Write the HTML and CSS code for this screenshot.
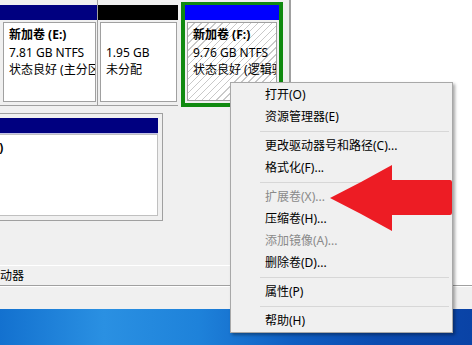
FILE: index.html
```html
<!DOCTYPE html>
<html lang="zh-CN">
<head>
  <meta charset="UTF-8" />
  <title>磁盘管理</title>
  <link rel="stylesheet" href="styles.css">
</head>
<body>
  <div class="window">
    <div class="top">
      <div class="left">
        <div class="row1">
          <div class="part part-e">
            <div class="bar navy"></div>
            <div class="body">
              <div class="line b">新加卷 (E:)</div>
              <div class="line">7.81 GB NTFS</div>
              <div class="line">状态良好 (主分区)</div>
            </div>
          </div>
          <div class="part part-u">
            <div class="bar black"></div>
            <div class="body">
              <div class="line">&nbsp;</div>
              <div class="line">1.95 GB</div>
              <div class="line">未分配</div>
            </div>
          </div>
          <div class="part part-f">
            <div class="bar blue"></div>
            <div class="body hatch">
              <div class="line b">新加卷 (F:)</div>
              <div class="line">9.76 GB NTFS</div>
              <div class="line">状态良好 (逻辑驱动器)</div>
            </div>
          </div>
        </div>
        <div class="row2">
          <div class="big">
            <div class="bar navy lav"></div>
            <div class="body">
              <div class="line b">新加卷 (G:)</div>
              <div class="line">9.77 GB</div>
              <div class="line">状态良好</div>
            </div>
          </div>
        </div>
        <div class="spacer"></div>
        <div class="drive-row">动器</div>
      </div>
      <div class="right"></div>
    </div>
    <div class="status"></div>
  </div>
  <div class="desk"></div>

  <div class="menu">
    <div class="item">打开(O)</div>
    <div class="item">资源管理器(E)</div>
    <div class="sep"></div>
    <div class="item">更改驱动器号和路径(C)...</div>
    <div class="item">格式化(F)...</div>
    <div class="sep"></div>
    <div class="item off">扩展卷(X)...</div>
    <div class="item">压缩卷(H)...</div>
    <div class="item off">添加镜像(A)...</div>
    <div class="item">删除卷(D)...</div>
    <div class="sep"></div>
    <div class="item">属性(P)</div>
    <div class="sep"></div>
    <div class="item">帮助(H)</div>
  </div>

  <svg class="arrow" width="132" height="74" viewBox="326 162 132 74">
    <path d="M330 198 Q362 182 392 165 L392 180 L450 180 Q452 180 452 182 L452 213 Q452 215 450 215 L392 215 L392 231 Q362 214 330 198 Z" fill="#ed1c24"/>
  </svg>
</body>
</html>
```

FILE: styles.css
```css
body { margin: 0; width: 472px; height: 345px; overflow: hidden; position: relative; font-family: "Noto Sans", "Noto Sans CJK SC", sans-serif; font-size: 12px; color: #000; }
.window { height: 309px; background: #f0f0f0; display: flex; flex-direction: column; }
.top { height: 286px; display: flex; border-bottom: 1px solid #a0a0a0; box-sizing: border-box; }
.left { width: 289px; display: flex; flex-direction: column; overflow: hidden; }
.right { flex: 1; background: #fff; border-left: 2px solid #a0a0a0; }
.status { flex: 1; border-top: 1px solid #fff; }
.desk { height: 36px; background: linear-gradient(to right, #1371cf 0, #2a90e2 22%, #1e82da 42%, #0f5ec2 62%, #0b4bb0 80%, #0a43a6 100%); }

.row1 { display: flex; height: 107px; flex: none; }
.part { display: flex; flex-direction: column; box-sizing: border-box; }
.part-e, .part-u { height: 106px; padding-top: 5px; border-bottom: 1px solid #a0a0a0; }
.part-e { width: 98px; border-right: 1px solid #a0a0a0; }
.part-u { width: 80px; }
.part-e .body { margin: 2px 1px 0 3px; height: 80px; }
.part-u .body { margin: 2px 1px 0 2px; height: 80px; }
.part-f { width: 102px; height: 105px; margin: 2px 0 0 3px; border: 3px solid #108a10; border-width: 3px 4px 4px 4px; }
.part-f .body { margin: 2px 2px 0 2px; height: 79px; }

.bar { height: 15px; flex: none; }
.navy { background: #000080; }
.black { background: #000; }
.blue { background: #0000ff; }
.lav { border-bottom: 1px solid #c4c4e8; }

.body { background: #fff; border: 1px solid #a0a0a0; box-sizing: border-box; padding: 3px 0 0 5px; overflow: hidden; white-space: nowrap; }
.hatch { background: repeating-linear-gradient(135deg, #fff 0 4px, #c9c9c9 4px 5px); }
.line { line-height: 17.5px; }
.b { font-weight: bold; }

.row2 { margin-top: 6px; flex: none; }
.big { width: 226px; margin-left: -63px; box-sizing: border-box; border: 1px solid #a0a0a0; padding: 4px 4px 4px 0; }
.big .body { height: 82px; border-color: #c0c0c0; padding-top: 4px; }

.spacer { flex: 1; }
.drive-row { height: 19px; flex: none; border-top: 1px solid #fff; line-height: 19px; white-space: nowrap; }

.menu { position: absolute; left: 230px; top: 82px; width: 223px; box-sizing: border-box; background: #f0f0f0; border: 1px solid #a8a8a8; padding: 1px 2px 0 2px; box-shadow: 2px 2px 3px rgba(0,0,0,0.35); }
.item { height: 22px; line-height: 22px; padding-left: 32px; white-space: nowrap; }
.item.off { color: #8a8a8a; }
.sep { height: 1px; margin: 3px 1px 3px 27px; background: #d7d7d7; }

.arrow { position: absolute; left: 326px; top: 162px; }
```
